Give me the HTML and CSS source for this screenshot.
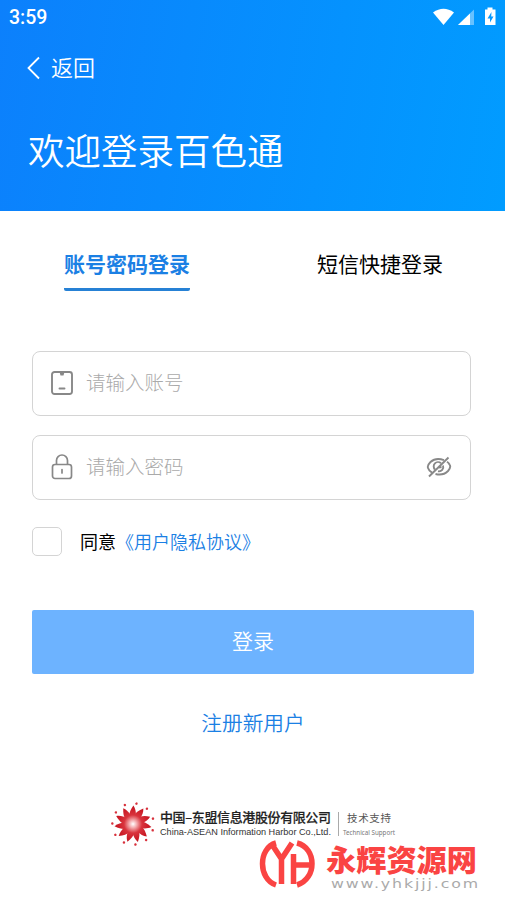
FILE: index.html
```html
<!DOCTYPE html>
<html lang="zh-CN">
<head>
<meta charset="utf-8">
<title>登录</title>
<link rel="stylesheet" href="styles.css">
</head>
<body>
<header class="hero">
  <div class="status">
    <span class="time">3:59</span>
    <svg class="status-icons" width="66" height="20" viewBox="0 0 66 20">
      <path d="M1 5.500Q11.500 -2 22 5.500L11.500 18Z" fill="#fff"/>
      <path d="M26 18 L42 2.500V18Z" fill="#fff" fill-opacity=".4"/>
      <path d="M26 18 L38 6.500V18Z" fill="#fff"/>
      <path d="M53 2.500H55.500V.5H60.500V2.500H63.500V18H53Z" fill="#fff"/>
      <path d="M59.500 5L55.500 11.500H58V15.500L61.500 9.500H59.200Z" fill="#079aff"/>
    </svg>
  </div>
  <a class="back">
    <svg width="14" height="24" viewBox="0 0 14 24"><path d="M13 1.500L2.500 12L13 22.500" fill="none" stroke="#fff" stroke-width="1.800"/></svg>
    <span>返回</span>
  </a>
  <h1>欢迎登录百色通</h1>
</header>
<main>
  <nav class="tabs">
    <a class="tab active">账号密码登录</a>
    <a class="tab">短信快捷登录</a>
  </nav>
  <form class="form">
    <label class="field">
      <svg width="22" height="24" viewBox="0 0 22 24" fill="none" stroke="#888" stroke-width="1.900" stroke-linecap="round"><rect x="1" y="1" width="20" height="22" rx="2.500"/><path d="M8.500 17.500H13.500"/><path d="M8.500 1H13.500L12.500 4.500H9.500Z" fill="#888" stroke="none"/></svg>
      <span class="placeholder">请输入账号</span>
    </label>
    <label class="field">
      <svg width="22" height="26" viewBox="0 0 22 26" fill="none" stroke="#888" stroke-width="1.700" stroke-linecap="round"><rect x="1.500" y="10.500" width="19" height="14" rx="2.500"/><path d="M5.500 10V6.500A5.500 5.500 0 0 1 16.500 6.500V10M11 15.500V19"/></svg>
      <span class="placeholder">请输入密码</span>
      <svg class="eye" width="26" height="22" viewBox="0 0 26 22" fill="none" stroke="#888" stroke-width="1.900"><path d="M18 4.200Q10 1 4.500 6Q1 9.500 2 12Q3 15 6 16.700M9.500 18Q17 20 22 15Q25.500 11 23.500 8.500Q22.800 7 21 5.800"/><path d="M15 7.300A4.300 4.300 0 0 0 9 13.500M12 15.200A4.300 4.300 0 0 0 17 9.500M13 11.500L15.500 11"/><path d="M3 20.500L22.500 1.500"/></svg>
    </label>
    <div class="agreement"><span class="checkbox"></span><span class="terms">同意<a>《用户隐私协议》</a></span></div>
    <button class="submit" type="button">登录</button>
    <a class="register">注册新用户</a>
  </form>
</main>
<footer class="support">
  <svg class="burst" width="46" height="46" viewBox="-23 -23 46 46">
    <defs>
      <radialGradient id="red" gradientUnits="userSpaceOnUse" cx="0" cy="0" r="18"><stop offset="0" stop-color="#fff"/><stop offset=".2" stop-color="#f5b0b3"/><stop offset=".5" stop-color="#d9343d"/><stop offset="1" stop-color="#c5131f"/></radialGradient>
      <g id="petal"><path d="M0 0C-4.500 -5 -4.500 -11 2 -18.500C5.500 -12 3.500 -5 0 0Z" fill="url(#red)"/><circle cx="5.200" cy="-20" r="1.250" fill="#d8313c"/></g>
    </defs>
    <use href="#petal" transform="rotate(-5)"/><use href="#petal" transform="rotate(27.700)"/><use href="#petal" transform="rotate(60.500)"/><use href="#petal" transform="rotate(93.200)"/><use href="#petal" transform="rotate(126)"/><use href="#petal" transform="rotate(158.600)"/><use href="#petal" transform="rotate(191.400)"/><use href="#petal" transform="rotate(224)"/><use href="#petal" transform="rotate(256.800)"/><use href="#petal" transform="rotate(289.500)"/><use href="#petal" transform="rotate(322.300)"/>
  </svg>
  <svg class="company" width="250" height="46" viewBox="0 0 250 46">
    <text class="company-cn" x="4" y="21" textLength="171">中国–东盟信息港股份有限公司</text>
    <text class="company-en" x="4" y="34" textLength="171" lengthAdjust="spacingAndGlyphs">China-ASEAN Information Harbor Co.,Ltd.</text>
    <path d="M182.500 11V35" stroke="#aaa"/>
    <text class="tech-cn" x="191" y="20.500" textLength="44">技术支持</text>
    <text class="tech-en" x="187" y="34" textLength="52" lengthAdjust="spacingAndGlyphs">Technical Support</text>
  </svg>
</footer>
<svg class="watermark" width="230" height="56" viewBox="0 0 230 56">
  <g fill="none" stroke="#fa4443" stroke-width="5.500">
    <path d="M19 6C1 11 1 42 19 48" />
    <path d="M40 6C60 11 60 42 40 48" />
    <path d="M14 6L24.500 22L35 6M24.500 20V47M36.500 17V47M36.500 28H54"/>
  </g>
  <text class="mark-name" x="69" y="34" textLength="151" lengthAdjust="spacingAndGlyphs">永辉资源网</text>
  <text class="mark-url" x="74" y="51" textLength="149" lengthAdjust="spacingAndGlyphs">www.yhkjjj.com</text>
</svg>
</body>
</html>
```
FILE: styles.css
```css
* { box-sizing: border-box; }
body {
  margin: 0;
  height: 899px;
  position: relative;
  overflow: hidden;
  background: #fff;
  color: #111;
  font-family: Roboto, "Noto Sans CJK SC", sans-serif;
}
svg { display: block; flex: none; }
.hero {
  height: 211px;
  color: #fff;
  background: linear-gradient(100deg, #0c80fc, #019cff);
}
.status {
  height: 34px;
  padding: 0 7px 0 9px;
  display: flex;
  align-items: center;
  justify-content: space-between;
}
.time { font-size: 19.500px; font-weight: 500; }
.back {
  height: 67px;
  padding-left: 26px;
  display: flex;
  align-items: center;
  gap: 11px;
  font-size: 22px;
  font-weight: 350;
}
.back span { margin-top: -3px; }
h1 {
  margin: 25px 0 0 28px;
  font-size: 36.500px;
  line-height: 54px;
  font-weight: 350;
}
.tabs {
  height: 80px;
  padding: 37px 62px 0 64px;
  display: flex;
  justify-content: space-between;
  font-size: 21px;
  line-height: 34px;
}
.tab { height: 43px; color: #000; }
.active {
  color: #1b80e4;
  font-weight: 700;
  border-bottom: 3px solid #2681d5;
  border-radius: 2px;
}
.form {
  padding: 60px 31px 0 32px;
  display: flex;
  flex-direction: column;
}
.field {
  width: 439px;
  height: 65px;
  margin-bottom: 19px;
  padding: 0 18px 2px 18px;
  border: 1px solid #d4d4d4;
  border-radius: 8px;
  display: flex;
  align-items: center;
  gap: 13px;
}
.placeholder {
  margin-top: -2px;
  color: #aaa;
  font-size: 19.500px;
  font-weight: 300;
}
.eye { margin-left: auto; }
.agreement {
  height: 29px;
  margin-top: 8px;
  display: flex;
  align-items: center;
  gap: 18px;
  font-size: 18px;
  color: #000;
}
.agreement a { color: #1b80e4; font-weight: 350; }
.terms { margin-top: -1px; }
.checkbox {
  width: 30px;
  height: 29px;
  border: 1.500px solid #d4d4d4;
  border-radius: 5px;
}
.submit {
  height: 64px;
  margin-top: 54px;
  padding: 0 0 4px;
  border: 0;
  border-radius: 2px;
  color: #fff;
  background: #6db3ff;
  font: 350 21px "Noto Sans CJK SC", sans-serif;
}
.register {
  align-self: center;
  margin-top: 34px;
  color: #1b80e4;
  font-size: 20.700px;
  font-weight: 350;
  line-height: 32px;
}
.support {
  margin: 61px 0 0 110px;
  display: flex;
}
.company-cn { font: 500 13px "Noto Sans CJK SC", sans-serif; fill: #222; stroke: #222; stroke-width: .2; }
.company-en { font: 9.500px "Liberation Sans", sans-serif; fill: #333; }
.tech-cn { font: 10.500px "Noto Sans CJK SC", sans-serif; fill: #555; }
.tech-en { font: 6.500px "Noto Sans", sans-serif; fill: #777; }
.watermark { position: absolute; left: 257px; top: 837px; }
.mark-name { font: 900 30px "Noto Sans CJK SC", sans-serif; fill: #fa4443; }
.mark-url { font: 12.500px "DejaVu Sans", sans-serif; fill: #aaa; letter-spacing: 1.500px; }
```
